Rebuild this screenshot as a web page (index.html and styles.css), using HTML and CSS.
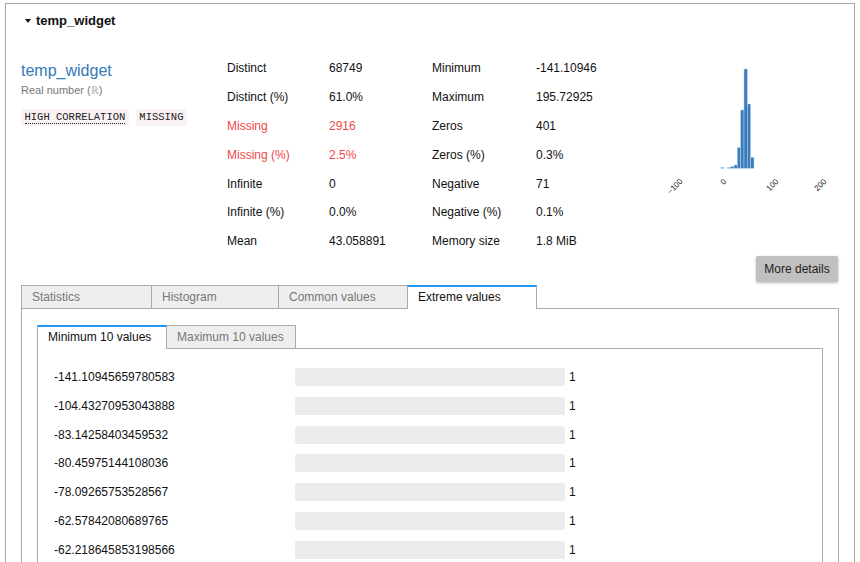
FILE: index.html
```html
<!DOCTYPE html>
<html>
<head>
<meta charset="utf-8">
<link rel="stylesheet" href="styles.css">
</head>
<body>
<div class="card">
  <div class="card-head"><span class="caret"></span>temp_widget</div>
  <div class="overview">
    <div class="var-info">
      <a class="var-name">temp_widget</a>
      <div class="var-type">Real number (<span class="realsym">ℝ</span>)</div>
      <div class="badges">
        <code class="badge"><abbr>HIGH CORRELATION</abbr></code>
        <code class="badge">MISSING</code>
      </div>
    </div>
    <div class="stats">
      <div>Distinct</div><div>68749</div><div>Minimum</div><div>-141.10946</div>
      <div>Distinct (%)</div><div>61.0%</div><div>Maximum</div><div>195.72925</div>
      <div class="alert">Missing</div><div class="alert">2916</div><div>Zeros</div><div>401</div>
      <div class="alert">Missing (%)</div><div class="alert">2.5%</div><div>Zeros (%)</div><div>0.3%</div>
      <div>Infinite</div><div>0</div><div>Negative</div><div>71</div>
      <div>Infinite (%)</div><div>0.0%</div><div>Negative (%)</div><div>0.1%</div>
      <div>Mean</div><div>43.058891</div><div>Memory size</div><div>1.8 MiB</div>
    </div>
    <svg class="mini-hist" width="187" height="150" viewBox="651 52 187 150">
      <g fill="#3a7dba" stroke="#b5d0ea" stroke-width="0.5">
        <rect x="720.7" y="167.6" width="3.3" height="0.7"/>
        <rect x="727.3" y="167.5" width="3.3" height="0.8"/>
        <rect x="730.7" y="166.7" width="3.3" height="1.6"/>
        <rect x="734" y="165" width="3.3" height="3.3"/>
        <rect x="737.3" y="147.7" width="3.3" height="20.6"/>
        <rect x="740.7" y="110" width="3.3" height="58.3"/>
        <rect x="744" y="69" width="3.3" height="99.3"/>
        <rect x="747.3" y="104" width="3.3" height="64.3"/>
        <rect x="750.7" y="157.3" width="3.3" height="11"/>
      </g>
      <g class="ticks" font-size="8" text-anchor="middle" dominant-baseline="central" fill="#111">
        <text transform="translate(675 186.5) rotate(-45)">−100</text>
        <text transform="translate(723.5 182) rotate(-45)">0</text>
        <text transform="translate(772.5 185) rotate(-45)">100</text>
        <text transform="translate(820.5 185) rotate(-45)">200</text>
      </g>
    </svg>
  </div>
  <div class="actions"><button class="btn-more">More details</button></div>
  <div class="tabs">
    <div class="tab tab-w131">Statistics</div>
    <div class="tab tab-w128">Histogram</div>
    <div class="tab">Common values</div>
    <div class="tab active">Extreme values</div>
  </div>
  <div class="tab-pane">
    <div class="tabs">
      <div class="tab active">Minimum 10 values</div>
      <div class="tab">Maximum 10 values</div>
    </div>
    <div class="inner-pane">
      <div class="ext-row"><div class="ext-val">-141.10945659780583</div><div class="ext-bar"></div><div class="ext-count">1</div></div>
      <div class="ext-row"><div class="ext-val">-104.43270953043888</div><div class="ext-bar"></div><div class="ext-count">1</div></div>
      <div class="ext-row"><div class="ext-val">-83.14258403459532</div><div class="ext-bar"></div><div class="ext-count">1</div></div>
      <div class="ext-row"><div class="ext-val">-80.45975144108036</div><div class="ext-bar"></div><div class="ext-count">1</div></div>
      <div class="ext-row"><div class="ext-val">-78.09265753528567</div><div class="ext-bar"></div><div class="ext-count">1</div></div>
      <div class="ext-row"><div class="ext-val">-62.57842080689765</div><div class="ext-bar"></div><div class="ext-count">1</div></div>
      <div class="ext-row"><div class="ext-val">-62.218645853198566</div><div class="ext-bar"></div><div class="ext-count">1</div></div>
    </div>
  </div>
</div>
</body>
</html>
```

FILE: styles.css
```css
html, body {
  margin: 0;
  padding: 0;
  overflow: hidden;
  background: #fff;
}
body {
  font-family: "Liberation Sans", Arial, Helvetica, sans-serif;
  font-size: 12px;
  color: #111;
}
.card {
  margin: 3px 5px 0 5px;
  border: 1px solid #a8a8a8;
  border-bottom: none;
  padding: 8px 15px 0 15px;
  min-height: 700px;
}
.card-head {
  font-weight: bold;
  font-size: 13px;
  line-height: 17px;
  color: #111;
  display: flex;
  align-items: center;
}
.caret {
  width: 0;
  height: 0;
  border-left: 3.5px solid transparent;
  border-right: 3.5px solid transparent;
  border-top: 4px solid #111;
  margin: 0 5px 0 4px;
}
.overview {
  display: flex;
  margin-top: 25px;
}
.var-info {
  width: 206px;
  flex: 0 0 206px;
  padding-top: 7px;
}
.var-name {
  display: block;
  font-size: 16px;
  line-height: 20px;
  color: #337ab7;
  font-weight: 500;
}
.var-type {
  margin-top: 2px;
  font-size: 11px;
  line-height: 14px;
  color: #777;
}
.realsym {
  color: #aaa;
}
.badges {
  display: flex;
  gap: 7px;
  margin-top: 12px;
}
.badge {
  font-family: "Liberation Mono", "Courier New", monospace;
  font-size: 10.5px;
  line-height: 17px;
  height: 17px;
  padding: 0 3.5px;
  background: #f9f1f4;
  color: #222;
  border-radius: 2px;
}
.badge abbr {
  text-decoration: none;
  border-bottom: 1px dotted #222;
}
.stats {
  display: grid;
  grid-template-columns: 102px 103px 104px 115px;
  grid-auto-rows: 28.8px;
  align-items: center;
  flex: 0 0 auto;
  color: #111;
}
.stats .alert {
  color: #f04848;
}
.mini-hist {
  display: block;
  flex: 0 0 auto;
  margin-top: -2px;
}
.actions {
  display: flex;
  justify-content: flex-end;
  margin-top: 0;
}
.btn-more {
  font-family: "Liberation Sans", Arial, Helvetica, sans-serif;
  font-size: 12px;
  color: #222;
  background: #c0c0c0;
  border: none;
  border-radius: 2px;
  width: 82px;
  height: 26px;
  padding: 0;
  box-shadow: 0 1px 3px rgba(0, 0, 0, 0.28);
  margin-right: 1px;
}
.tabs {
  display: flex;
  margin-top: 3px;
}
.tab {
  box-sizing: border-box;
  width: 130px;
  height: 23px;
  line-height: 22px;
  padding: 0 10px;
  background: #eee;
  color: #777;
  border: 1px solid #aaa;
  border-bottom: none;
  margin-right: -1px;
  white-space: nowrap;
}
.tab.tab-w131 {
  width: 131px;
}
.tab.tab-w128 {
  width: 128px;
}
.tab.active {
  background: #fff;
  color: #111;
  border-top: 2px solid #2196f3;
  height: 24px;
  line-height: 21px;
  position: relative;
  z-index: 1;
  margin-bottom: -1px;
}
.tab-pane {
  border: 1px solid #aaa;
  padding: 16px 15px 0 15px;
  min-height: 400px;
}
.tab-pane .tabs {
  margin-top: 0;
}
.inner-pane {
  border: 1px solid #aaa;
  padding: 14px 16px 0 16px;
  min-height: 300px;
}
.ext-row {
  display: flex;
  align-items: center;
  height: 28.8px;
}
.ext-val {
  width: 241px;
  flex: 0 0 241px;
}
.ext-bar {
  width: 270px;
  height: 18px;
  background: #ececec;
  border-radius: 2px;
}
.ext-count {
  margin-left: 4px;
}
```
